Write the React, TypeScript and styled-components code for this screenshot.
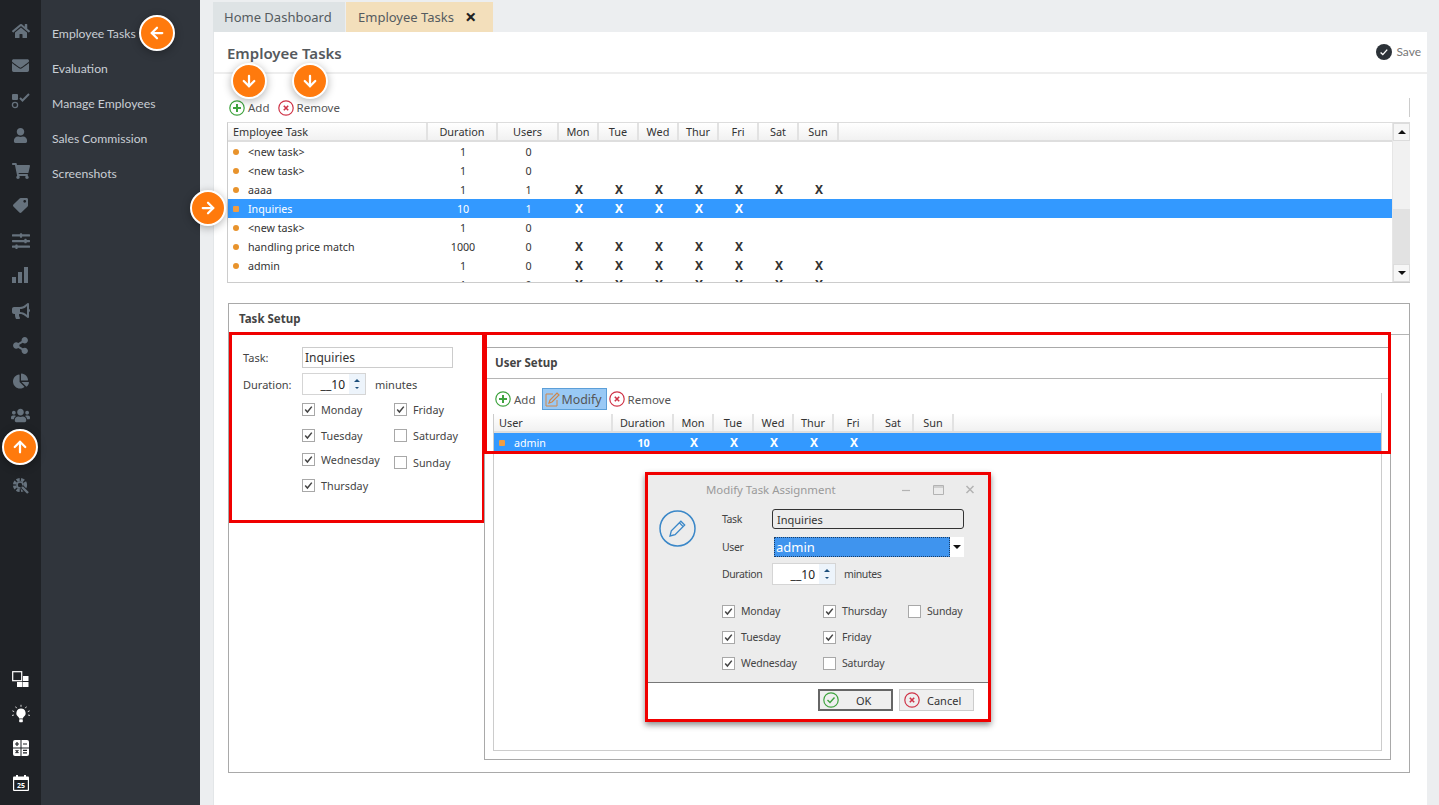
import React from "react";
import styled, { createGlobalStyle } from "styled-components";
import {
  FaHome,
  FaEnvelope,
  FaUser,
  FaShoppingCart,
  FaTag,
  FaSlidersH,
  FaBullhorn,
  FaShareAlt,
  FaChartPie,
  FaUsers,
  FaBriefcase,
} from "react-icons/fa";
import { ArrowLeft, ArrowRight, ArrowUp, ArrowDown } from "lucide-react";

const GlobalStyle = createGlobalStyle`
  html, body {
    margin: 0;
    padding: 0;
    background: #eceef0;
    font-family: "Noto Sans", "Open Sans", sans-serif;
    font-size: 11px;
    color: #333;
  }
  * { box-sizing: border-box; }
`;

const Page = styled.div`
  position: relative;
  display: flex;
  width: 1439px;
  height: 805px;
  overflow: hidden;
`;

/* left icon rail */
const Rail = styled.div`
  width: 41px;
  flex: none;
  display: flex;
  flex-direction: column;
  padding: 13px 0 5px;
  background: #1f2226;
`;

const RailSlot = styled.div<{ $light?: boolean }>`
  height: ${(p) => (p.$light ? 34.5 : 35)}px;
  flex: none;
  display: flex;
  align-items: center;
  justify-content: center;
  color: ${(p) => (p.$light ? "#ffffff" : "#66727d")};
`;

const RailBottom = styled.div`
  margin-top: auto;
  display: flex;
  flex-direction: column;
`;

const Menu = styled.div`
  width: 159px;
  flex: none;
  padding-top: 16px;
  background: #30353c;
`;

const MenuItem = styled.div`
  height: 35px;
  display: flex;
  align-items: center;
  padding-left: 11px;
  font-family: Lato, "Noto Sans", sans-serif;
  font-size: 12.2px;
  color: #c9ced4;
`;

/* main column */
const Main = styled.div`
  flex: 1;
  min-width: 0;
  display: flex;
  flex-direction: column;
  padding: 2px 12px 0 13px;
`;

const Tabs = styled.div`
  display: flex;
  height: 30px;
  flex: none;
`;

const Tab = styled.div<{ $active?: boolean }>`
  display: flex;
  align-items: center;
  width: ${(p) => (p.$active ? "147px" : "132px")};
  padding-left: ${(p) => (p.$active ? "12px" : "11px")};
  margin-right: ${(p) => (p.$active ? "0" : "1px")};
  background: ${(p) => (p.$active ? "#f3dfbb" : "#dee3e5")};
  font-size: 13px;
  color: #555b60;
`;

const TabClose = styled.span`
  margin-left: 11px;
  font-size: 20px;
  font-weight: 700;
  color: #222;
  line-height: 1;
`;

const Panel = styled.div`
  flex: 1;
  display: flex;
  flex-direction: column;
  background: #fff;
  border-left: 1px solid #e3e6e8;
`;

const PanelHeader = styled.div`
  height: 42px;
  flex: none;
  display: flex;
  align-items: center;
  justify-content: space-between;
  padding: 2px 6px 0 13px;
  border-bottom: 2px solid #eeeeee;
`;

const Title = styled.div`
  font-size: 15px;
  font-weight: 600;
  color: #55595d;
`;

const SaveButton = styled.div`
  display: flex;
  align-items: center;
  gap: 4px;
  margin-top: -3px;
  font-family: Lato, "Noto Sans", sans-serif;
  font-size: 12px;
  color: #777;
`;

const PanelBody = styled.div`
  flex: 1;
  padding: 24px 17px 0 13px;
`;

const Toolbar = styled.div`
  height: 19px;
  display: flex;
  align-items: center;
  padding-left: 2px;
  margin-bottom: 5px;
  border-right: 1px solid #ccc;
`;

const ToolButton = styled.div<{ $active?: boolean; $gap?: number }>`
  display: flex;
  align-items: center;
  height: 22px;
  gap: ${(p) => (p.$active ? 2 : 3)}px;
  margin-right: ${(p) => p.$gap ?? 8}px;
  width: ${(p) => (p.$active ? "65px" : "auto")};
  padding-left: ${(p) => (p.$active ? 2 : 0)}px;
  font-size: ${(p) => (p.$active ? 12.4 : 11.5)}px;
  color: #555;
  background: ${(p) => (p.$active ? "#99c9f5" : "transparent")};
  border: ${(p) => (p.$active ? "1px solid #5c9fd8" : "0")};
`;

/* grids */
const GridWrap = styled.div<{ $h: number }>`
  display: flex;
  height: ${(p) => p.$h}px;
  border-left: 1px solid #ccc;
  border-bottom: 1px solid #ccc;
  border-top: 1px solid #ddd;
`;

const GridMain = styled.div`
  flex: 1;
  min-width: 0;
  overflow: hidden;
`;

const GridHead = styled.div<{ $cols: string }>`
  display: grid;
  grid-template-columns: ${(p) => p.$cols};
  height: 19px;
  background: linear-gradient(#ffffff, #f1f1f1);
  border-bottom: 2px solid #dedede;
`;

const HeadCell = styled.div<{ $left?: boolean }>`
  display: flex;
  align-items: center;
  justify-content: ${(p) => (p.$left ? "flex-start" : "center")};
  padding-left: ${(p) => (p.$left ? "5px" : "0")};
  border-right: 2px solid #e2e2e2;
  font-size: 10.9px;
  color: #333;
`;

const GridRow = styled.div<{ $cols: string; $selected?: boolean }>`
  display: grid;
  grid-template-columns: ${(p) => p.$cols};
  height: 19px;
  align-items: center;
  background: ${(p) => (p.$selected ? "#3399ff" : "transparent")};
  color: ${(p) => (p.$selected ? "#fff" : "#333")};
`;

const NameCell = styled.div`
  display: flex;
  align-items: center;
  padding-left: 5px;
  font-size: 10.7px;
`;

const Bullet = styled.span<{ $square?: boolean }>`
  width: 6px;
  height: 6px;
  flex: none;
  margin-right: 9px;
  border-radius: ${(p) => (p.$square ? "1px" : "50%")};
  background: ${(p) => (p.$square ? "#ef9d43" : "#e8932c")};
`;

const Cell = styled.div<{ $bold?: boolean }>`
  text-align: center;
  font-size: 10.7px;
  font-weight: ${(p) => (p.$bold ? 700 : 400)};
`;

const DayMark = styled.div`
  text-align: center;
  font-size: 12px;
  font-weight: 700;
`;

const ScrollBar = styled.div`
  width: 18px;
  flex: none;
  display: flex;
  flex-direction: column;
  background: #e2e2e2;
  border-left: 1px solid #e6e6e6;
`;

const ScrollArrow = styled.div<{ $down?: boolean }>`
  height: 18px;
  flex: none;
  display: flex;
  align-items: center;
  justify-content: center;
  background: #f6f6f6;
  border: 1px solid #dcdcdc;
  margin-top: ${(p) => (p.$down ? "auto" : "0")};
  &::before {
    content: "";
    border-left: 4px solid transparent;
    border-right: 4px solid transparent;
    ${(p) => (p.$down ? "border-top: 4px solid #111;" : "border-bottom: 4px solid #111;")}
  }
`;

const ScrollThumb = styled.div`
  height: 68px;
  flex: none;
  background: #f1f1f1;
`;

/* task setup */
const Setup = styled.div`
  height: 470px;
  margin: 20px 0 0 1px;
  border: 1px solid #a9a9a9;
  display: flex;
  flex-direction: column;
`;

const SetupTitle = styled.div`
  height: 31px;
  flex: none;
  display: flex;
  align-items: center;
  padding: 0 0 2px 10px;
  border-bottom: 1px solid #b5b5b5;
  font-size: 11.5px;
  font-weight: 700;
  color: #444;
`;

const SetupBody = styled.div`
  flex: 1;
  display: flex;
  align-items: flex-start;
`;

const TaskForm = styled.div`
  width: 256px;
  height: 191px;
  flex: none;
  margin-top: -3px;
  padding: 12px 0 0 11px;
  border: 3px solid #f00000;
`;

const FormRow = styled.div<{ $labelW: number; $mb?: number; $tight?: boolean }>`
  display: grid;
  grid-template-columns: ${(p) => p.$labelW}px auto 1fr;
  align-items: center;
  margin-bottom: ${(p) => p.$mb ?? 0}px;
  font-size: ${(p) => (p.$tight ? 10.5 : 11)}px;
  letter-spacing: ${(p) => (p.$tight ? "-0.4px" : "0")};
  color: #444;
`;

const TextField = styled.div`
  width: 151px;
  height: 21px;
  display: flex;
  align-items: center;
  padding-left: 2px;
  border: 1px solid #ccc;
  background: #fff;
  font-size: 12px;
  color: #333;
`;

const SpinBox = styled.div`
  width: 64px;
  height: 22px;
  display: flex;
  justify-content: flex-end;
  border: 1px solid #d5d5d5;
  background: #fff;
  font-size: 12px;
  letter-spacing: 0;
  color: #222;
`;

const SpinValue = styled.div`
  display: flex;
  align-items: center;
  padding-right: 4px;
`;

const SpinArrows = styled.div`
  width: 16px;
  display: flex;
  flex-direction: column;
  align-items: center;
  justify-content: center;
  gap: 5px;
  background: #edf4fb;
  &::before {
    content: "";
    border-left: 3px solid transparent;
    border-right: 3px solid transparent;
    border-bottom: 3px solid #1d4f7c;
  }
  &::after {
    content: "";
    border-left: 2px solid transparent;
    border-right: 2px solid transparent;
    border-top: 2px solid #1d4f7c;
  }
`;

const Unit = styled.span<{ $m: number }>`
  margin-left: ${(p) => p.$m}px;
  color: #444;
`;

const CheckColumns = styled.div`
  display: flex;
  margin: 8px 0 0 59px;
`;

const CheckColumn = styled.div<{ $w: number }>`
  width: ${(p) => p.$w}px;
`;

const CheckLine = styled.div<{ $mb?: number; $tight?: boolean }>`
  display: flex;
  align-items: center;
  gap: 6px;
  height: 13px;
  margin-bottom: ${(p) => p.$mb ?? 0}px;
  font-size: ${(p) => (p.$tight ? 10.5 : 10.8)}px;
  letter-spacing: ${(p) => (p.$tight ? "-0.15px" : "0")};
  color: #444;
  white-space: nowrap;
`;

const Box = styled.span`
  width: 13px;
  height: 13px;
  flex: none;
  display: flex;
  align-items: center;
  justify-content: center;
  border: 1px solid #a8a8a8;
  background: #fff;
`;

/* user setup */
const UserSetup = styled.div`
  flex: 1;
  min-width: 0;
  height: 413px;
  margin: 12px 18px 0 0;
  margin-left: -1px;
  border: 1px solid #a9a9a9;
  display: flex;
  flex-direction: column;
`;

const UserFrame = styled.div`
  height: 358px;
  flex: none;
  display: flex;
  flex-direction: column;
  margin: 14px 8px 0;
  border-right: 1px solid #ccc;
`;

const UserTools = styled.div`
  height: 22px;
  flex: none;
  display: flex;
  align-items: center;
  margin: -5px 0 4px 2px;
`;

const UserGridBox = styled.div`
  flex: 1;
  border-left: 1px solid #ccc;
  border-bottom: 1px solid #ccc;
`;

/* dialog */
const Dialog = styled.div`
  position: absolute;
  left: 645px;
  top: 472px;
  width: 346px;
  height: 250px;
  display: flex;
  flex-direction: column;
  border: 3px solid #f00000;
  background: #ececec;
  box-shadow: 0 3px 6px rgba(0, 0, 0, 0.45);
`;

const DialogBar = styled.div`
  height: 31px;
  flex: none;
  display: flex;
  align-items: center;
  padding: 0 0 2px 58px;
  font-size: 11.4px;
  color: #9a9a9a;
`;

const DialogControls = styled.div`
  margin-left: auto;
  display: flex;
  align-items: center;
  padding-right: 14px;
`;

const DialogMain = styled.div`
  display: flex;
`;

const DialogIcon = styled.div`
  width: 74px;
  flex: none;
  padding: 4px 0 0 11px;
`;

const DialogForm = styled.div`
  flex: 1;
  min-width: 0;
  padding-top: 3px;
`;

const ReadField = styled.div`
  width: 192px;
  height: 20px;
  display: flex;
  align-items: center;
  padding-left: 4px;
  border: 1px solid #333;
  border-radius: 3px;
  font-size: 11px;
  letter-spacing: 0;
  color: #333;
`;

const SelectField = styled.div`
  width: 190px;
  height: 20px;
  display: flex;
  margin-left: 2px;
  background: #fff;
  font-size: 13px;
  letter-spacing: 0;
`;

const SelectValue = styled.div`
  flex: 1;
  display: flex;
  align-items: center;
  padding-left: 1px;
  background: #3f94ee;
  border: 1px dotted #1a3d66;
  color: #fff;
`;

const SelectArrow = styled.div`
  width: 14px;
  display: flex;
  align-items: center;
  justify-content: center;
  &::before {
    content: "";
    border-left: 4px solid transparent;
    border-right: 4px solid transparent;
    border-top: 4px solid #111;
  }
`;

const DialogChecks = styled.div`
  display: grid;
  grid-template-columns: 101px 85px 1fr;
  grid-auto-rows: 26px;
  align-items: center;
  margin-top: 13px;
`;

const DialogFooter = styled.div`
  height: 37px;
  flex: none;
  margin-top: auto;
  display: flex;
  justify-content: flex-end;
  gap: 6px;
  padding: 6px 14px 0 0;
  background: #fff;
  border-top: 1px solid #777;
`;

const DialogButton = styled.div<{ $primary?: boolean }>`
  width: 75px;
  height: 22px;
  display: flex;
  align-items: center;
  padding-left: ${(p) => (p.$primary ? 3 : 4)}px;
  gap: ${(p) => (p.$primary ? 17 : 7)}px;
  border: ${(p) => (p.$primary ? "2px solid #666" : "1px solid #ccc")};
  background: #efefef;
  font-size: 11px;
  color: #333;
`;

/* tutorial overlays */
const RedFrame = styled.div`
  position: absolute;
  left: 484px;
  top: 332px;
  width: 907px;
  height: 122px;
  border: 3px solid #f00000;
  pointer-events: none;
`;

const Badge = styled.div<{ $x: number; $y: number }>`
  position: absolute;
  left: ${(p) => p.$x - 18}px;
  top: ${(p) => p.$y - 18}px;
  width: 36px;
  height: 36px;
  display: flex;
  align-items: center;
  justify-content: center;
  border-radius: 50%;
  border: 2px solid #fff;
  background: #ff7a0d;
  color: #fff;
  box-shadow: 0 2px 8px rgba(0, 0, 0, 0.3);
`;

/* small drawings */
const AddIcon = () => (
  <svg width="16" height="16" viewBox="0 0 16 16" fill="none">
    <circle cx="8" cy="8" r="7.2" stroke="#3ea33e" strokeWidth="1.2" />
    <path d="M8 4v8M4 8h8" stroke="#3ea33e" strokeWidth="2" />
  </svg>
);

const RemoveIcon = () => (
  <svg width="16" height="16" viewBox="0 0 16 16" fill="none">
    <circle cx="8" cy="8" r="7.2" stroke="#cf3347" strokeWidth="1.2" />
    <path d="M5.8 5.8l4.4 4.4M10.2 5.8l-4.4 4.4" stroke="#cf3347" strokeWidth="1.6" />
  </svg>
);

const OkIcon = () => (
  <svg width="16" height="16" viewBox="0 0 16 16" fill="none">
    <circle cx="8" cy="8" r="7.2" stroke="#3ea33e" strokeWidth="1.2" />
    <path d="M4.5 8l2.5 2.5 4.5-5" stroke="#3ea33e" strokeWidth="1.4" />
  </svg>
);

const ModifyIcon = () => (
  <svg width="15" height="16" viewBox="0 0 15 16" fill="none">
    <path d="M12 9v6H1V3h7" stroke="#d0874a" strokeWidth="1" />
    <path d="M4 12l1-3 7-7 2 2-7 7z" stroke="#d0874a" strokeWidth="1.2" />
  </svg>
);

const CheckMark = () => (
  <svg width="9" height="9" viewBox="0 0 9 9" fill="none">
    <path d="M1.2 4.6l2.2 2.4L7.8 1.6" stroke="#444" strokeWidth="1.5" />
  </svg>
);

const SaveIcon = () => (
  <svg width="16" height="16" viewBox="0 0 16 16">
    <circle cx="8" cy="8" r="8" fill="#2c3238" />
    <path d="M4.6 8.6l2.2 2 4.4-5" fill="none" stroke="#fff" strokeWidth="1.4" />
  </svg>
);

const TasksGlyph = () => (
  <svg width="20" height="16" viewBox="0 0 20 16" fill="#66727d">
    <rect x="1" y="1" width="6" height="6" rx="1" />
    <circle cx="4" cy="12" r="2.6" fill="none" stroke="#66727d" strokeWidth="1.3" />
    <path d="M9 5l2.5 2.5L18 1" fill="none" stroke="#66727d" strokeWidth="2" />
  </svg>
);

const BarsGlyph = () => (
  <svg width="17" height="17" viewBox="0 0 17 17" fill="#66727d">
    <rect x="0" y="10" width="4" height="6" />
    <rect x="6" y="5" width="4" height="11" />
    <rect x="12" y="0" width="4" height="16" />
  </svg>
);

const GearGlyph = () => (
  <svg width="18" height="18" viewBox="0 0 18 18" fill="none" stroke="#66727d">
    <circle cx="8" cy="8" r="5.4" strokeWidth="3.4" strokeDasharray="3 1.3" />
    <circle cx="8" cy="8" r="3" strokeWidth="1.6" />
    <path d="M9.5 9.5l6.5 6.5" stroke="#1f2226" strokeWidth="4" />
    <path d="M10 10l6 6" strokeWidth="2.4" />
  </svg>
);

const WindowsGlyph = () => (
  <svg width="17" height="16" viewBox="0 0 17 16" fill="#fff">
    <rect x="0.7" y="0.7" width="9" height="9" fill="none" stroke="#fff" strokeWidth="1.2" />
    <rect x="11" y="5" width="5.5" height="5" />
    <rect x="5" y="11" width="5.5" height="5" />
    <rect x="11" y="11" width="5.5" height="5" />
  </svg>
);

const BulbGlyph = () => (
  <svg width="20" height="20" viewBox="0 0 20 20" fill="#fff">
    <path d="M10 4.5a4.6 4.6 0 0 0-2.6 8.4c.5.4.7.9.7 1.6h3.8c0-.7.2-1.2.7-1.6A4.6 4.6 0 0 0 10 4.5z" />
    <rect x="8.2" y="15.2" width="3.6" height="3" rx="0.6" />
    <path
      d="M10 .8v2M4.6 2.6l1 1.6M15.4 2.6l-1 1.6M1.4 6.8l1.8.9M18.6 6.8l-1.8.9M1 11.5l1.9-.5M19 11.5l-1.9-.5"
      stroke="#d5d5d5"
      strokeWidth="1"
    />
  </svg>
);

const CalcGlyph = () => (
  <svg width="16" height="16" viewBox="0 0 16 16">
    <rect width="16" height="16" rx="2" fill="#fff" />
    <path d="M0 8h16M8 0v16" stroke="#1f2226" strokeWidth="1" />
    <path d="M2 4h4M4 2v4M10 4h4M2.6 10.2l2.8 2.8M5.4 10.2l-2.8 2.8M10 10.4h4M10 12.8h4" stroke="#1f2226" strokeWidth="1.2" />
  </svg>
);

const CalendarGlyph = () => (
  <svg width="16" height="16" viewBox="0 0 16 16">
    <rect y="1.5" width="16" height="14.5" rx="1" fill="#fff" />
    <rect x="1.2" y="5" width="13.6" height="9.8" fill="#1f2226" />
    <rect x="3" y="0" width="2" height="3" fill="#fff" />
    <rect x="11" y="0" width="2" height="3" fill="#fff" />
    <text x="8" y="13" textAnchor="middle" fontSize="7" fontWeight="700" fill="#fff" fontFamily="Noto Sans">25</text>
  </svg>
);

const PencilCircle = () => (
  <svg width="37" height="37" viewBox="0 0 37 37" fill="none" stroke="#3a87c8">
    <circle cx="18.5" cy="18.5" r="17.5" strokeWidth="1.5" />
    <path d="M11 26l1.3-5.2 9.6-9.6 3.8 3.8-9.6 9.6zM20.4 12.8l3.8 3.8" strokeWidth="1.3" />
  </svg>
);

const WindowControls = () => (
  <svg width="72" height="12" viewBox="0 0 72 12" fill="none" stroke="#b3b3b3">
    <path d="M0 6.5h8" strokeWidth="1.2" />
    <path d="M31.5 1.5h10v9h-10zM31.5 3h10" strokeWidth="1" />
    <path d="M64.5 2l7 7M71.5 2l-7 7" strokeWidth="1.5" />
  </svg>
);

const taskCols = "200px 70px 61px repeat(7, 40px) 1fr";
const userCols = "119px 61px repeat(7, 40px) 1fr";
const dayNames = ["Mon", "Tue", "Wed", "Thur", "Fri", "Sat", "Sun"];

const tasks = [
  { name: "<new task>", duration: 1, users: 0, days: 0 },
  { name: "<new task>", duration: 1, users: 0, days: 0 },
  { name: "aaaa", duration: 1, users: 1, days: 7 },
  { name: "Inquiries", duration: 10, users: 1, days: 5, selected: true },
  { name: "<new task>", duration: 1, users: 0, days: 0 },
  { name: "handling price match", duration: 1000, users: 0, days: 5 },
  { name: "admin", duration: 1, users: 0, days: 7 },
  { name: "", duration: 1, users: 0, days: 7 },
];

const railIcons = [
  <FaHome key="home" size={18} />,
  <FaEnvelope key="mail" size={17} />,
  <TasksGlyph key="tasks" />,
  <FaUser key="user" size={15} />,
  <FaShoppingCart key="cart" size={18} />,
  <FaTag key="tag" size={15} style={{ transform: "scaleX(-1)" }} />,
  <FaSlidersH key="sliders" size={18} />,
  <BarsGlyph key="chart" />,
  <FaBullhorn key="horn" size={18} />,
  <FaShareAlt key="share" size={17} />,
  <FaChartPie key="pie" size={16} />,
  <FaUsers key="users" size={19} />,
  <FaBriefcase key="hidden" size={15} />,
  <GearGlyph key="gear" />,
];

const Check = ({ label, on, mb, tight }: { label: string; on?: boolean; mb?: number; tight?: boolean }) => (
  <CheckLine $mb={mb} $tight={tight}>
    <Box>{on && <CheckMark />}</Box>
    {label}
  </CheckLine>
);

export default function App() {
  return (
    <Page>
      <GlobalStyle />
      <Rail>
        {railIcons.map((icon, i) => (
          <RailSlot key={i}>{icon}</RailSlot>
        ))}
        <RailBottom>
          <RailSlot $light><WindowsGlyph /></RailSlot>
          <RailSlot $light><BulbGlyph /></RailSlot>
          <RailSlot $light><CalcGlyph /></RailSlot>
          <RailSlot $light><CalendarGlyph /></RailSlot>
        </RailBottom>
      </Rail>
      <Menu>
        {["Employee Tasks", "Evaluation", "Manage Employees", "Sales Commission", "Screenshots"].map((m) => (
          <MenuItem key={m}>{m}</MenuItem>
        ))}
      </Menu>
      <Main>
        <Tabs>
          <Tab>Home Dashboard</Tab>
          <Tab $active>
            Employee Tasks<TabClose>×</TabClose>
          </Tab>
        </Tabs>
        <Panel>
          <PanelHeader>
            <Title>Employee Tasks</Title>
            <SaveButton>
              <SaveIcon />
              Save
            </SaveButton>
          </PanelHeader>
          <PanelBody>
            <Toolbar>
              <ToolButton><AddIcon />Add</ToolButton>
              <ToolButton><RemoveIcon />Remove</ToolButton>
            </Toolbar>
            <GridWrap $h={161}>
              <GridMain>
                <GridHead $cols={taskCols}>
                  <HeadCell $left>Employee Task</HeadCell>
                  <HeadCell>Duration</HeadCell>
                  <HeadCell>Users</HeadCell>
                  {dayNames.map((d) => (
                    <HeadCell key={d}>{d}</HeadCell>
                  ))}
                </GridHead>
                {tasks.map((t, i) => (
                  <GridRow key={i} $cols={taskCols} $selected={t.selected}>
                    <NameCell>
                      {t.name && <Bullet $square={t.selected} />}
                      {t.name}
                    </NameCell>
                    <Cell>{t.duration}</Cell>
                    <Cell>{t.users}</Cell>
                    {dayNames.map((d, n) => (
                      <DayMark key={d}>{n < t.days ? "X" : ""}</DayMark>
                    ))}
                  </GridRow>
                ))}
              </GridMain>
              <ScrollBar>
                <ScrollArrow />
                <ScrollThumb />
                <ScrollArrow $down />
              </ScrollBar>
            </GridWrap>

            <Setup>
              <SetupTitle>Task Setup</SetupTitle>
              <SetupBody>
                <TaskForm>
                  <FormRow $labelW={59} $mb={5}>
                    <span>Task:</span>
                    <TextField>Inquiries</TextField>
                  </FormRow>
                  <FormRow $labelW={59}>
                    <span>Duration:</span>
                    <SpinBox>
                      <SpinValue>__10</SpinValue>
                      <SpinArrows />
                    </SpinBox>
                    <Unit $m={9}>minutes</Unit>
                  </FormRow>
                  <CheckColumns>
                    <CheckColumn $w={92}>
                      <Check label="Monday" on mb={13} />
                      <Check label="Tuesday" on mb={11} />
                      <Check label="Wednesday" on mb={13} />
                      <Check label="Thursday" on />
                    </CheckColumn>
                    <CheckColumn $w={80}>
                      <Check label="Friday" on mb={13} />
                      <Check label="Saturday" mb={14} />
                      <Check label="Sunday" />
                    </CheckColumn>
                  </CheckColumns>
                </TaskForm>
                <UserSetup>
                  <SetupTitle>User Setup</SetupTitle>
                  <UserFrame>
                    <UserTools>
                      <ToolButton $gap={6}><AddIcon />Add</ToolButton>
                      <ToolButton $active $gap={2}><ModifyIcon />Modify</ToolButton>
                      <ToolButton><RemoveIcon />Remove</ToolButton>
                    </UserTools>
                    <UserGridBox>
                      <GridHead $cols={userCols}>
                        <HeadCell $left>User</HeadCell>
                        <HeadCell>Duration</HeadCell>
                        {dayNames.map((d) => (
                          <HeadCell key={d}>{d}</HeadCell>
                        ))}
                      </GridHead>
                      <GridRow $cols={userCols} $selected>
                        <NameCell>
                          <Bullet $square />
                          admin
                        </NameCell>
                        <Cell $bold>10</Cell>
                        {dayNames.map((d, n) => (
                          <DayMark key={d}>{n < 5 ? "X" : ""}</DayMark>
                        ))}
                      </GridRow>
                    </UserGridBox>
                  </UserFrame>
                </UserSetup>
              </SetupBody>
            </Setup>
          </PanelBody>
        </Panel>
      </Main>

      <RedFrame />

      <Dialog>
        <DialogBar>
          Modify Task Assignment
          <DialogControls><WindowControls /></DialogControls>
        </DialogBar>
        <DialogMain>
          <DialogIcon><PencilCircle /></DialogIcon>
          <DialogForm>
            <FormRow $labelW={50} $mb={8} $tight>
              <span>Task</span>
              <ReadField>Inquiries</ReadField>
            </FormRow>
            <FormRow $labelW={50} $mb={6} $tight>
              <span>User</span>
              <SelectField>
                <SelectValue>admin</SelectValue>
                <SelectArrow />
              </SelectField>
            </FormRow>
            <FormRow $labelW={50} $tight>
              <span>Duration</span>
              <SpinBox>
                <SpinValue>__10</SpinValue>
                <SpinArrows />
              </SpinBox>
              <Unit $m={8}>minutes</Unit>
            </FormRow>
            <DialogChecks>
              <Check tight label="Monday" on />
              <Check tight label="Thursday" on />
              <Check tight label="Sunday" />
              <Check tight label="Tuesday" on />
              <Check tight label="Friday" on />
              <span />
              <Check tight label="Wednesday" on />
              <Check tight label="Saturday" />
            </DialogChecks>
          </DialogForm>
        </DialogMain>
        <DialogFooter>
          <DialogButton $primary><OkIcon />OK</DialogButton>
          <DialogButton><RemoveIcon />Cancel</DialogButton>
        </DialogFooter>
      </Dialog>

      <Badge $x={157} $y={33}><ArrowLeft size={18} strokeWidth={3} /></Badge>
      <Badge $x={249} $y={81}><ArrowDown size={18} strokeWidth={3} /></Badge>
      <Badge $x={310} $y={81}><ArrowDown size={18} strokeWidth={3} /></Badge>
      <Badge $x={208} $y={208}><ArrowRight size={18} strokeWidth={3} /></Badge>
      <Badge $x={20} $y={447}><ArrowUp size={18} strokeWidth={3} /></Badge>
    </Page>
  );
}
